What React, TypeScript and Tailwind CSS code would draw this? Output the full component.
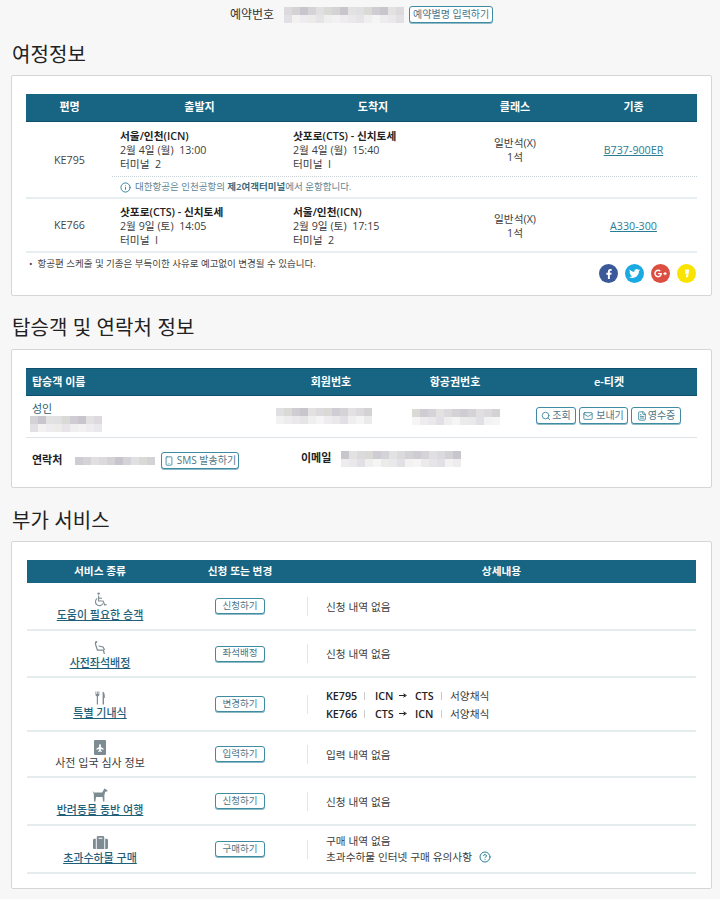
import React from 'react';
import { FaFacebookF, FaTwitter, FaGooglePlusG, FaPlane, FaSuitcase } from 'react-icons/fa';
import { Search, Mail, FileText, Info, CircleHelp, Smartphone } from 'lucide-react';

const font = { fontFamily: "'Open Sans', 'Noto Sans CJK KR', sans-serif" };

// blurred personal data in the shot, drawn as a grid of pale cells
function Mosaic({ cols, rows, cell, seed, className }: { cols: number; rows: number; cell: number; seed: number; className?: string }) {
  const dark = ['#d6d3d8', '#dcdadc', '#cfccd3', '#e3e2e3', '#d9d9d6', '#c9c5cc', '#e0dfe1', '#d3d3d5'];
  const pale = ['#eeecee', '#e6e4e7', '#f2f2f2', '#ebebe9', '#e2e0e4', '#f5f5f6', '#e9e8ea', '#efeff0'];
  const cells = Array.from({ length: cols * rows }, (_, i) => {
    const row = Math.floor(i / cols);
    const set = rows > 1 && row % 2 === 1 ? pale : dark;
    return set[(i * 5 + seed * 3 + (i % 3)) % set.length];
  });
  return (
    <div className={`grid shrink-0 ${className ?? ''}`} style={{ gridTemplateColumns: `repeat(${cols}, ${cell}px)`, gridAutoRows: `${cell}px` }}>
      {cells.map((c, i) => <div key={i} style={{ background: c }} />)}
    </div>
  );
}

function Heading({ children, className }: { children: React.ReactNode; className?: string }) {
  return <h2 className={`pl-3 text-[20px] leading-[28px] tracking-[0.1px] text-[#222] ${className ?? ''}`}>{children}</h2>;
}

function OutlineButton({ children, className }: { children: React.ReactNode; className?: string }) {
  return (
    <span className={`flex items-center justify-center rounded-[3px] border border-[#3f8ba1] bg-white text-[#4b7687] shadow-[0_1px_0_#8fbac7] ${className ?? ''}`}>
      {children}
    </span>
  );
}

function Flight({ code, from, to, fromDate, toDate, fromTerm, toTerm, seat, plane, pad, codePad }: {
  code: string; from: string; to: string; fromDate: string; toDate: string; fromTerm: string; toTerm: string; seat: string; plane: string; pad: string; codePad: string;
}) {
  return (
    <div className={`flex items-stretch ${pad}`}>
      <div className={`flex w-[87px] items-center justify-center text-[#444] ${codePad}`}>{code}</div>
      <div className="w-[173px] pl-[7px] leading-[14px] whitespace-pre">
        <p className="font-semibold text-[#222]">{from}</p>
        <p>{fromDate}</p>
        <p>{fromTerm}</p>
      </div>
      <div className="w-[174px] pl-[7px] leading-[14px] whitespace-pre">
        <p className="font-semibold text-[#222]">{to}</p>
        <p>{toDate}</p>
        <p>{toTerm}</p>
      </div>
      <div className="flex w-[110px] flex-col justify-center text-center leading-[14px]">
        <p>{seat}</p>
        <p>1석</p>
      </div>
      <div className="flex w-[127px] items-center justify-center">
        <span className="text-[#2a7d96] underline">{plane}</span>
      </div>
    </div>
  );
}

function WheelchairIcon() {
  return (
    <svg width="13" height="15" viewBox="0 0 13 15" fill="none" stroke="#7d8b92" strokeWidth="1.1">
      <circle cx="4.6" cy="1.6" r="1.2" fill="#7d8b92" stroke="none" />
      <path d="M4.6 3.6 V9 H9 L10.8 13 L12.6 12.4" />
      <path d="M4.8 6.2 H8" />
      <path d="M3.2 6.4 A4 4 0 1 0 9 11.6" />
    </svg>
  );
}

function SeatIcon() {
  return (
    <svg width="13" height="14" viewBox="0 0 13 14" fill="none" stroke="#7d8b92" strokeWidth="1.2">
      <path d="M1.8 0.5 L1.4 3 L3.4 9.2 L9.4 9.2 L10.4 13" />
      <path d="M4.6 5 L9 6 L10.6 9" />
      <circle cx="2.4" cy="1" r="0.9" fill="#7d8b92" stroke="none" />
    </svg>
  );
}

function MealIcon() {
  return (
    <svg width="11" height="14" viewBox="0 0 11 14" fill="#7d8b92">
      <path d="M0.5 0.5 H1.3 V3 H2 V0.5 H2.8 V3 H3.5 V0.5 H4.3 V4.2 L3 5.6 V13.5 H1.8 V5.6 L0.5 4.2 Z" />
      <path d="M7.6 0.5 C9.6 1.2 10 3.6 9.8 7 H9 V13.5 H7.6 Z" />
    </svg>
  );
}

function DogIcon() {
  return (
    <svg width="16" height="14" viewBox="0 0 16 14" fill="#7d8b92">
      <path d="M0.4 2.6 L1.8 4.4 H10.2 L11.6 2 L12.4 0.4 L13.4 1 L15.6 2.4 L15.2 3.4 L13.2 3.8 L12.4 7 V13.4 H11 L10.6 9 H4 L3.4 13.4 H2 L1.8 6 Z" />
    </svg>
  );
}

const services = [
  { icon: <WheelchairIcon />, name: '도움이 필요한 승객', link: true, btn: '신청하기', h: 'h-[48px]', body: <p className="mt-[2px]">신청 내역 없음</p> },
  { icon: <SeatIcon />, name: '사전좌석배정', link: true, btn: '좌석배정', h: 'h-[47px]', body: <p className="mt-[2px]">신청 내역 없음</p> },
  {
    icon: <MealIcon />, name: '특별 기내식', link: true, btn: '변경하기', h: 'h-[54px]',
    body: (
      <div className="mt-[1px] leading-[18px]">
        {[['KE795', 'ICN', 'CTS'], ['KE766', 'CTS', 'ICN']].map(([k, a, b]) => (
          <div key={k} className="flex items-center">
            <b className="w-[28px] font-semibold text-[#222]">{k}</b>
            <span className="mx-[10px] h-[8px] w-px bg-[#ccc]" />
            <b className="w-[18px] font-semibold text-[#222]">{a}</b>
            <svg width="8" height="5" viewBox="0 0 8 5" className="mr-[8px] ml-[6px]"><path d="M0 2.5 H6 M4.4 0.8 L7.4 2.5 L4.4 4.2" fill="none" stroke="#222" /></svg>
            <b className="w-[20px] font-semibold text-[#222]">{b}</b>
            <span className="mr-[8px] ml-[6px] h-[8px] w-px bg-[#ccc]" />
            <span>서양채식</span>
          </div>
        ))}
      </div>
    ),
  },
  {
    icon: <span className="flex h-[15px] w-[12px] items-center justify-center rounded-[1px] bg-[#7d8b92]"><FaPlane size={8} color="#fff" className="-rotate-90" /></span>,
    name: '사전 입국 심사 정보', link: false, btn: '입력하기', h: 'h-[46px]', body: <p className="mt-[2px]">입력 내역 없음</p>,
  },
  { icon: <DogIcon />, name: '반려동물 동반 여행', link: true, btn: '신청하기', h: 'h-[48px]', body: <p className="mt-[2px]">신청 내역 없음</p> },
  {
    icon: <FaSuitcase size={15} color="#7d8b92" />, name: '초과수하물 구매', link: true, btn: '구매하기', h: 'h-[48px]',
    body: (
      <div className="leading-[16px]">
        <p>구매 내역 없음</p>
        <p className="flex items-center">초과수하물 인터넷 구매 유의사항<CircleHelp size={12} color="#2a7d96" className="ml-[7px]" /></p>
      </div>
    ),
  },
];

export default function App() {
  return (
    <div className="h-[899px] w-[720px] overflow-hidden bg-[#f7f7f7] text-[10.7px] text-[#3c3c3c]" style={font}>
      {/* booking number */}
      <div className="flex h-[41px] items-start pt-[6px] pl-[230px]">
        <span className="mt-[1px] text-[12px] leading-[16px] text-[#333]">예약번호</span>
        <Mosaic cols={15} rows={2} cell={8} seed={3} className="mt-[1px] ml-[10px] h-[16px]" />
        <OutlineButton className="ml-[5px] h-[17px] w-[84px] text-[10px]">예약별명 입력하기</OutlineButton>
      </div>

      <Heading>여정정보</Heading>
      <section className="mr-[8px] ml-[11px] mt-[6px] h-[221px] rounded-[2px] border border-[#d6d6d6] bg-white px-[14px] pt-[18px]">
        <div className="flex h-[28px] items-center border-b border-[#0f4f6b] bg-[#176583] text-[11px] font-semibold text-white">
          <span className="w-[87px] text-center">편명</span>
          <span className="w-[173px] text-center">출발지</span>
          <span className="w-[174px] text-center">도착지</span>
          <span className="w-[110px] text-center">클래스</span>
          <span className="w-[127px] text-center">기종</span>
        </div>
        <Flight code="KE795" from="서울/인천(ICN)" to="삿포로(CTS) - 신치토세" fromDate="2월 4일 (월)  13:00" toDate="2월 4일 (월)  15:40" fromTerm="터미널  2" toTerm="터미널  I" seat="일반석(X)" plane="B737-900ER" pad="pt-[7px] pb-[5px]" codePad="pt-[21px]" />
        <div className="ml-[86px] flex h-[21px] items-center border-t border-dotted border-[#c9d3d7] pl-[8px] text-[9.5px] text-[#5d8494]">
          <Info size={11} color="#2a7d96" className="mr-[4px]" />
          <span>대한항공은 인천공항의 <b className="font-semibold text-[#3f6a7b]">제2여객터미널</b>에서 운항합니다.</span>
        </div>
        <div className="border-t-2 border-[#e6eef1]">
          <Flight code="KE766" from="삿포로(CTS) - 신치토세" to="서울/인천(ICN)" fromDate="2월 9일 (토)  14:05" toDate="2월 9일 (토)  17:15" fromTerm="터미널  I" toTerm="터미널  2" seat="일반석(X)" plane="A330-300" pad="pt-[6px] pb-[4px]" codePad="pb-[1px]" />
        </div>
        <div className="flex items-start justify-between border-t-2 border-[#e6eef1]">
          <p className="pt-[4px] pl-[3px] text-[9.5px] text-[#444]">•&nbsp; 항공편 스케줄 및 기종은 부득이한 사유로 예고없이 변경될 수 있습니다.</p>
          <div className="mt-[11px] mr-[1px] flex gap-[7px]">
            <span className="flex h-[19px] w-[19px] items-center justify-center rounded-full bg-[#3b5998]"><FaFacebookF size={10} color="#fff" /></span>
            <span className="flex h-[19px] w-[19px] items-center justify-center rounded-full bg-[#1aa9e1]"><FaTwitter size={11} color="#fff" /></span>
            <span className="flex h-[19px] w-[19px] items-center justify-center rounded-full bg-[#dc4e41]"><FaGooglePlusG size={13} color="#fff" /></span>
            <span className="flex h-[19px] w-[19px] items-center justify-center rounded-full bg-[#fbe300]">
              <svg width="6" height="9" viewBox="0 0 6 9"><path d="M1 0.5 H5.2 L4 8 L1.8 8.6 L2.6 5 H1 Z" fill="#fff" /></svg>
            </span>
          </div>
        </div>
      </section>

      <Heading className="mt-[18px]">탑승객 및 연락처 정보</Heading>
      <section className="mr-[8px] ml-[11px] mt-[7px] h-[139px] rounded-[2px] border border-[#d6d6d6] bg-white px-[14px] pt-[18px]">
        <div className="flex h-[28px] items-center border-y border-[#0f4f6b] bg-[#176583] text-[11px] font-semibold text-white">
          <span className="w-[250px] pl-[6px]">탑승객 이름</span>
          <span className="w-[110px] text-center">회원번호</span>
          <span className="w-[138px] text-center">항공권번호</span>
          <span className="w-[173px] pr-[3px] text-center">e-티켓</span>
        </div>
        <div className="flex h-[42px] border-b border-[#dde3e6]">
          <div className="w-[250px] pt-[6px] pl-[4px]">
            <p className="pl-[2px] text-[11px] leading-[14px] text-[#2f5f72]">성인</p>
            <Mosaic cols={9} rows={2} cell={8} seed={5} />
          </div>
          <Mosaic cols={12} rows={2} cell={8} seed={2} className="mt-[12px] h-[16px]" />
          <Mosaic cols={11} rows={2} cell={8} seed={4} className="mt-[13px] ml-[40px] h-[16px]" />
          <div className="mt-[11px] ml-[36px] flex h-[17px] gap-[3px] text-[10px]">
            <OutlineButton className="w-[40px] gap-px"><Search size={10} color="#2f8299" />조회</OutlineButton>
            <OutlineButton className="w-[49px] gap-[3px]"><Mail size={10} color="#2f8299" />보내기</OutlineButton>
            <OutlineButton className="w-[50px] gap-px"><FileText size={10} color="#2f8299" />영수증</OutlineButton>
          </div>
        </div>
        <div className="flex items-center pt-[14px] pl-[6px]">
          <b className="w-[43px] text-[11px] font-semibold text-[#222]">연락처</b>
          <Mosaic cols={10} rows={1} cell={8} seed={6} className="h-[8px]" />
          <OutlineButton className="ml-[6px] h-[17px] w-[78px] gap-[3px] text-[10px]"><Smartphone size={10} color="#2f8299" />SMS 발송하기</OutlineButton>
          <b className="ml-[62px] -translate-y-[2px] text-[11px] font-semibold text-[#222]">이메일</b>
          <Mosaic cols={15} rows={2} cell={8} seed={7} className="ml-[10px] h-[16px] -translate-y-[2px]" />
        </div>
      </section>

      <Heading className="mt-[19px]">부가 서비스</Heading>
      <section className="mr-[8px] ml-[11px] mt-[6px] h-[348px] rounded-[2px] border border-[#d6d6d6] bg-white px-[15px] pt-[18px]">
        <div className="flex h-[23px] items-center bg-[#176583] text-[10.7px] font-semibold text-white">
          <span className="w-[146px] text-center">서비스 종류</span>
          <span className="w-[134px] text-center">신청 또는 변경</span>
          <span className="w-[389px] text-center">상세내용</span>
        </div>
        {services.map((s) => (
          <div key={s.name} className={`flex items-center border-b-2 border-[#e4ecee] ${s.h}`}>
            <div className="flex w-[146px] flex-col items-center">
              <span className="flex h-[17px] items-end justify-center">{s.icon}</span>
              <span className={`mt-[1px] text-[11px] leading-[14px] ${s.link ? 'font-medium text-[#1f6079] underline' : 'text-[#3c3c3c]'}`}>{s.name}</span>
            </div>
            <div className="flex w-[134px] justify-center">
              <OutlineButton className="h-[16px] w-[50px] text-[9.5px]">{s.btn}</OutlineButton>
            </div>
            <div className="flex h-[19px] items-center border-l border-[#e5e5e5] pl-[18px]">{s.body}</div>
          </div>
        ))}
      </section>
    </div>
  );
}
